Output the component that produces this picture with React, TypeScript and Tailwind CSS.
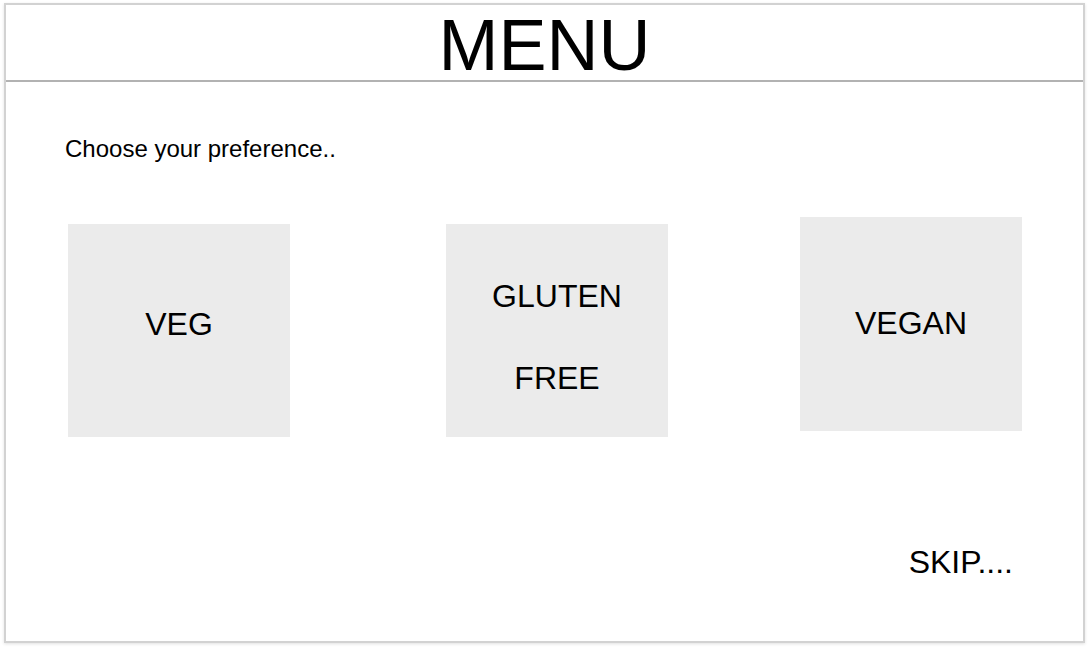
export default function App() {
  const font = { fontFamily: '"Liberation Sans", Arial, sans-serif' };
  return (
    <div className="w-[1088px] h-[647px] bg-white overflow-hidden" style={font}>
      <div className="ml-[4px] mt-[3px] w-[1081px] h-[640px] border-2 border-[#d2d2d2] shadow-[0_1px_3px_rgba(0,0,0,0.12)] flex flex-col text-black">
        <div className="h-[77px] border-b-2 border-[#b2b2b2] flex justify-center pt-[4px]">
          <div className="text-[72px] leading-[72px]">MENU</div>
        </div>
        <div className="flex flex-col">
          <div className="mt-[53px] ml-[59px] text-[24px] leading-[28px]">Choose your preference..</div>
          <div className="mt-[54px] flex items-start">
            <div className="ml-[62px] mt-[7px] w-[222px] h-[213px] bg-[#ebebeb] flex items-center justify-center pb-[14px] text-[32px] leading-[36px]">
              VEG
            </div>
            <div className="ml-[156px] mt-[7px] w-[222px] h-[213px] bg-[#ebebeb] flex flex-col items-center justify-center pt-[12px] text-[32px] leading-[82px] text-center">
              <div>GLUTEN</div>
              <div>FREE</div>
            </div>
            <div className="ml-[132px] w-[222px] h-[214px] bg-[#ebebeb] flex items-center justify-center pb-[2px] text-[32px] leading-[36px]">
              VEGAN
            </div>
          </div>
          <div className="mt-[107px] flex justify-end pr-[70px]">
            <div className="text-[32px] leading-[36px]">SKIP....</div>
          </div>
        </div>
      </div>
    </div>
  );
}
